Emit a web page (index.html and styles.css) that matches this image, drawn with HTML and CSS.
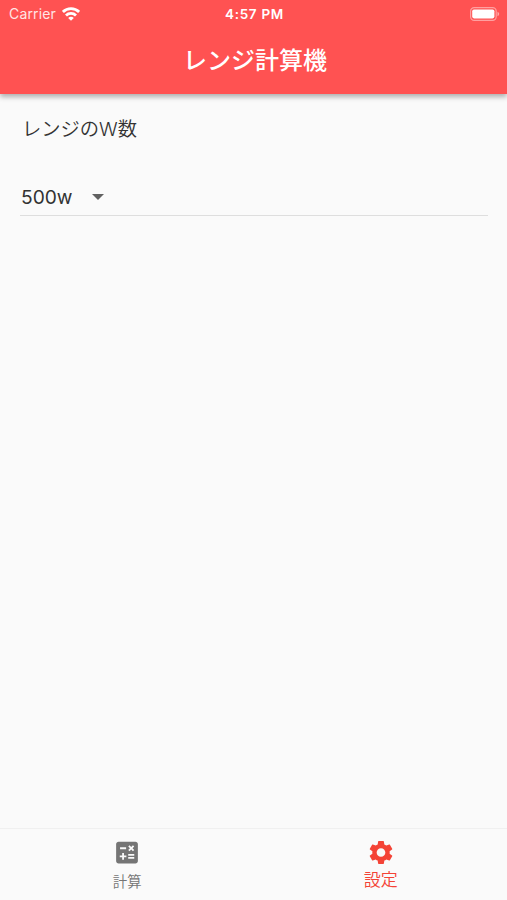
FILE: index.html
```html
<!doctype html>
<html lang="ja">
<head>
    <meta charset="UTF-8">
    <meta name="viewport" content="width=device-width, initial-scale=1.0">
    <title>レンジ計算機</title>
    <link rel="stylesheet" href="styles.css">
</head>
<body>
    <div class="app">
        <header class="header">
            <div class="status">
                <div class="carrier">
                    <span>Carrier</span>
                    <svg class="wifi" viewBox="0 0 18 14" fill="none" stroke="#fff" stroke-width="2.8">
                        <path d="M.9 4.9a11.5 11.5 0 0 1 16.2 0"/>
                        <path d="M4 8.4a7.1 7.1 0 0 1 10 0"/>
                        <path d="M9 13.8 6.2 11a3.9 3.9 0 0 1 5.6 0z" fill="#fff" stroke="none"/>
                    </svg>
                </div>
                <div class="time">4:57 PM</div>
                <div class="battery">
                    <svg viewBox="0 0 30 14">
                        <rect x=".6" y=".6" width="25.6" height="12.8" rx="3.6" fill="none" stroke="#fff" stroke-opacity=".45" stroke-width="1.2"/>
                        <rect x="2.2" y="2.4" width="22.2" height="9" rx="1.8" fill="#fff"/>
                        <path d="M27.5 4.8c2.2.8 2.2 3.6 0 4.4z" fill="#fff" fill-opacity=".5"/>
                    </svg>
                </div>
            </div>
            <h1 class="title">レンジ計算機</h1>
        </header>

        <main class="main">
            <div class="label">レンジのW数</div>
            <div class="select">
                <span class="value">500w</span>
                <svg class="arrow" viewBox="0 0 12 6"><path d="M0 0h12L6 6z"/></svg>
            </div>
        </main>

        <nav class="tabs">
            <a class="tab">
                <svg class="icon" viewBox="0 0 24 24"><path d="M19 3H5c-1.1 0-2 .9-2 2v14c0 1.1.9 2 2 2h14c1.1 0 2-.9 2-2V5c0-1.1-.9-2-2-2zm-5.97 4.06L14.09 6l1.41 1.41L16.91 6l1.06 1.06-1.41 1.41 1.41 1.41-1.06 1.06-1.41-1.4-1.41 1.41-1.06-1.06 1.41-1.41-1.41-1.42zM6.25 7.72h5v1.5h-5v-1.5zM11.5 16h-2v2H8v-2H6v-1.5h2v-2h1.5v2h2V16zm6.5 1.25h-5v-1.5h5v1.5zm0-2.5h-5v-1.5h5v1.5z"/></svg>
                <span>計算</span>
            </a>
            <a class="tab active">
                <svg class="icon" viewBox="0 0 24 24"><path d="M19.14 12.94c.04-.3.06-.61.06-.94 0-.32-.02-.64-.07-.94l2.03-1.58c.18-.14.23-.41.12-.61l-1.92-3.32c-.12-.22-.37-.29-.59-.22l-2.39.96c-.5-.38-1.03-.7-1.62-.94l-.36-2.54c-.04-.24-.24-.41-.48-.41h-3.84c-.24 0-.43.17-.47.41l-.36 2.54c-.59.24-1.13.57-1.62.94l-2.39-.96c-.22-.08-.47 0-.59.22L2.74 8.87c-.12.21-.08.47.12.61l2.03 1.58c-.05.3-.09.63-.09.94s.02.64.07.94l-2.03 1.58c-.18.14-.23.41-.12.61l1.92 3.32c.12.22.37.29.59.22l2.39-.96c.5.38 1.03.7 1.62.94l.36 2.54c.05.24.24.41.48.41h3.84c.24 0 .44-.17.47-.41l.36-2.54c.59-.24 1.13-.56 1.62-.94l2.39.96c.22.08.47 0 .59-.22l1.92-3.32c.12-.22.07-.47-.12-.61l-2.01-1.58zM12 15.6c-1.98 0-3.6-1.62-3.6-3.6s1.62-3.6 3.6-3.6 3.6 1.62 3.6 3.6-1.62 3.6-3.6 3.6z"/></svg>
                <span>設定</span>
            </a>
        </nav>
    </div>
</body>
</html>
```
FILE: styles.css
```css
* {
    margin: 0;
    padding: 0;
    box-sizing: border-box;
}

body {
    font-family: Inter, "Noto Sans CJK JP", sans-serif;
    color: #333;
    background-color: #fafafa;
}

.app {
    display: flex;
    flex-direction: column;
    height: 900px;
}

.header {
    height: 94px;
    color: #fff;
    background-color: #ff5252;
    box-shadow: 0 3px 5px rgba(0, 0, 0, .3);
}

.status {
    display: grid;
    grid-template-columns: 1fr auto 1fr;
    align-items: center;
    height: 27px;
    padding: 0 7px 0 9px;
    font-size: 13.5px;
}

.carrier {
    display: flex;
    align-items: center;
    gap: 6px;
    font-size: 14px;
    letter-spacing: .15px;
}

.carrier span {
    opacity: .85;
}

.wifi {
    width: 18px;
    height: 14px;
}

.time {
    font-weight: 600;
    letter-spacing: .7px;
}

.battery {
    display: flex;
    justify-content: flex-end;
}

.battery svg {
    width: 30px;
    height: 14px;
}

.title {
    height: 67px;
    padding-left: 3px;
    line-height: 68px;
    text-align: center;
    font-size: 24px;
    font-weight: 500;
}

.main {
    flex: 1;
    padding: 20px 19px 0 20px;
}

.label {
    height: 30px;
    line-height: 30px;
    padding-left: 2px;
    font-size: 19.3px;
    font-weight: 350;
}

.select {
    display: flex;
    align-items: center;
    gap: 19px;
    height: 39px;
    margin-top: 33px;
    padding-left: 1px;
    border-bottom: 1px solid #dedede;
}

.value {
    padding-top: 1px;
    font-size: 19.2px;
}

.arrow {
    width: 12px;
    height: 6px;
    margin-top: 1px;
    fill: #616161;
}

.tabs {
    display: flex;
    height: 72px;
    border-top: 1px solid #f0f0f0;
}

.tab {
    flex: 1;
    display: flex;
    flex-direction: column;
    align-items: center;
    padding: 9px 0 0 1px;
    font-size: 14.4px;
    font-weight: 350;
    line-height: 29px;
    color: #757575;
}

.icon {
    width: 30px;
    height: 29px;
    fill: currentColor;
}

.active {
    font-size: 17px;
    line-height: 27px;
    color: #f44336;
}
```
